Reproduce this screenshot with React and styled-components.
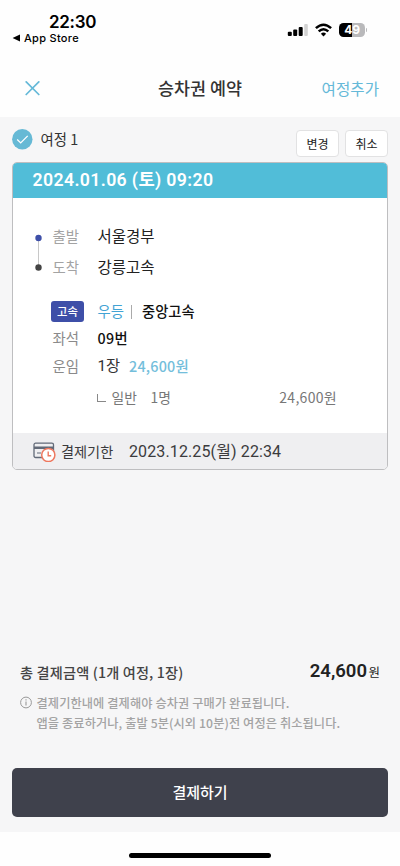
import React from 'react';
import styled, { createGlobalStyle } from 'styled-components';

const kr = `'Noto Sans CJK KR', sans-serif`;
const mixed = `Roboto, 'Noto Sans CJK KR', sans-serif`;

const GlobalStyle = createGlobalStyle`
  * { box-sizing: border-box; }
  body { margin: 0; background: #fff; font-family: ${kr}; color: #333; }
  button { font: inherit; border: 0; padding: 0; margin: 0; background: none; }
`;

const Screen = styled.div`
  width: 400px;
  height: 866px;
  display: flex;
  flex-direction: column;
  background: #fefefe;
  overflow: hidden;
  white-space: nowrap;
`;

const StatusBar = styled.header`
  height: 60px;
  padding: 12px 33px 0 12px;
  display: flex;
  justify-content: space-between;
  font-family: Inter, sans-serif;
  color: #000;
`;

const Clock = styled.div`
  height: 20px;
  padding-left: 37px;
  font-size: 17px;
  font-weight: 600;
  line-height: 20px;
  letter-spacing: -0.3px;
`;

const BackToApp = styled.div`
  display: flex;
  align-items: center;
  gap: 4px;
  height: 12px;
  font-size: 11px;
  font-weight: 500;
  letter-spacing: 0.3px;
  line-height: 12px;
`;

const StatusIcons = styled.div`
  display: flex;
  align-items: center;
  height: 16px;
  margin-top: 10px;
`;

const NavBar = styled.nav`
  height: 57px;
  padding: 0 21px 2px 25px;
  display: grid;
  grid-template-columns: 80px 1fr 80px;
  align-items: center;
`;

const CloseButton = styled.button`
  display: flex;
  width: 16px;
  height: 16px;
`;

const Title = styled.h1`
  margin: 0;
  font-size: 17.4px;
  font-weight: 500;
  line-height: 24px;
  text-align: center;
  padding-right: 4px;
  color: #333;
`;

const AddTrip = styled.button`
  font-size: 15.6px !important;
  line-height: 24px !important;
  text-align: right;
  color: #65b9d8;
`;

const Main = styled.main`
  height: 715px;
  background: #f6f6f7;
  padding: 0 12px;
  display: flex;
  flex-direction: column;
`;

const TripHead = styled.div`
  height: 45px;
  display: flex;
  align-items: flex-start;
  padding-top: 12px;
`;

const TripName = styled.div`
  flex: 1;
  margin-left: 7.5px;
  font-size: 14.4px;
  line-height: 20px;
`;

const SmallButton = styled.button`
  width: 43px;
  height: 27px;
  margin: 1px 0 0 6px;
  border: 1px solid #e2e2e3 !important;
  border-radius: 4px;
  background: #fff !important;
  font-size: 12px !important;
  line-height: 23px !important;
  color: #222;
`;

const Card = styled.section`
  height: 308px;
  border: 1px solid #bebec0;
  border-radius: 5px;
  background: #fff;
  overflow: hidden;
  display: flex;
  flex-direction: column;
`;

const CardDate = styled.div`
  height: 35px;
  flex: none;
  padding-left: 19.5px;
  background: #51bdd8;
  color: #fff;
  font-family: ${mixed};
  font-size: 17.7px;
  font-weight: 600;
  line-height: 35px;
  letter-spacing: 0.37px;
`;

const Route = styled.div`
  display: grid;
  grid-template-columns: 12px 1fr;
  column-gap: 7.5px;
  padding: 22px 0 0 20px;
`;

const RouteMark = styled.svg`
  display: block;
  margin-top: 11px;
`;

const Row = styled.div`
  height: ${(p) => p.$h}px;
  display: flex;
  align-items: center;
  line-height: ${(p) => p.$h}px;
`;

const Label = styled.span`
  width: 45px;
  font-size: 14.4px;
  color: ${(p) => (p.$soft ? '#a3a3a3' : '#8a8a8a')};
  font-weight: 400;
`;

const Place = styled.span`
  font-size: 15.5px;
  color: #222;
`;

const Details = styled.div`
  flex: 1;
  padding: 15px 50.5px 0 39.5px;
`;

const ClassCell = styled.span`
  width: 45px;
`;

const ClassBadge = styled.span`
  display: block;
  width: 33px;
  height: 21px;
  margin-left: -1.5px;
  border-radius: 3px;
  background: #3e4fa8;
  color: #fff;
  font-size: 11.3px;
  font-weight: 500;
  line-height: 21px;
  text-align: center;
`;

const Grade = styled.span`
  font-size: 14.4px;
  color: #42a3d4;
`;

const Divider = styled.i`
  width: 1px;
  height: 14px;
  margin: 2px 10px 0 7px;
  background: #aaa;
`;

const Company = styled.span`
  font-size: 14.3px;
  font-weight: 500;
  color: #111;
`;

const Seat = styled(Company)`
  letter-spacing: 0.3px;
`;

const Tickets = styled.span`
  width: 31.5px;
  padding-top: 1px;
  font-family: ${mixed};
  font-size: 15.3px;
  color: #333;
`;

const Fare = styled.span`
  font-size: 14.4px;
  font-weight: 500;
  letter-spacing: 0.2px;
  color: #74bedb;
`;

const Breakdown = styled.div`
  height: 32px;
  margin-top: 1px;
  padding-left: 44px;
  display: flex;
  align-items: center;
  font-size: 13.8px;
  line-height: 32px;
  color: #777;
`;

const Corner = styled.i`
  width: 9px;
  height: 8px;
  margin: 1px 5.5px 0 0.5px;
  border: solid #888;
  border-width: 0 0 1px 1px;
`;

const Passenger = styled.span`
  width: 39px;
`;

const BreakdownFare = styled.span`
  margin-left: auto;
  margin-right: -0.5px;
  font-size: 14px;
  letter-spacing: 0.3px;
`;

const Deadline = styled.div`
  height: 36px;
  display: flex;
  align-items: center;
  padding: 0 0 0 20px;
  background: #efeff1;
  line-height: 36px;
  color: #3b3b3d;
`;

const DeadlineLabel = styled.span`
  width: 68px;
  margin-left: 5px;
  font-size: 14.2px;
`;

const DeadlineTime = styled.span`
  margin-top: 1px;
  font-family: ${mixed};
  font-size: 16px;
  letter-spacing: 0.12px;
`;

const Summary = styled.div`
  margin-top: auto;
  padding: 0 8px;
`;

const Total = styled.div`
  height: 30px;
  display: flex;
  justify-content: space-between;
  align-items: center;
  line-height: 28px;
`;

const TotalLabel = styled.span`
  font-size: 14.2px;
  font-weight: 500;
  letter-spacing: 0.15px;
  color: #444;
`;

const TotalPrice = styled.strong`
  font-family: Roboto, sans-serif;
  font-size: 18.5px;
  font-weight: 600;
  color: #222;
`;

const Won = styled.small`
  margin-left: 1.5px;
  font-family: ${kr};
  font-size: 12.5px;
  font-weight: 400;
`;

const Notice = styled.p`
  margin: 6px 0 0;
  display: grid;
  grid-template-columns: 13px 1fr;
  column-gap: 3.5px;
  font-size: 12.2px;
  font-weight: 500;
  letter-spacing: 0.11px;
  line-height: 20px;
  color: #a3a3a3;
`;

const PayButton = styled.button`
  height: 49px;
  flex: none;
  margin: 35px 0 15.5px !important;
  border-radius: 5px;
  background: #3f414c !important;
  color: #fff;
  font-size: 15px !important;
  font-weight: 500 !important;
  line-height: 48px !important;
`;

const HomeArea = styled.footer`
  flex: 1;
  display: flex;
  justify-content: center;
  align-items: flex-start;
  padding-top: 21px;
`;

const HomeIndicator = styled.div`
  width: 142px;
  height: 5px;
  border-radius: 3px;
  background: #000;
`;

function Signal() {
  return (
    <svg width="20" height="14" viewBox="0 0 20 14" overflow="visible">
      <rect x="-1.2" y="8.8" width="4" height="4.2" rx="1" />
      <rect x="4.2" y="6.5" width="4" height="6.5" rx="1" />
      <rect x="9.7" y="4" width="4" height="9" rx="1" />
      <rect x="15.2" y="1" width="3.6" height="12" rx="1" fill="#d2d2d2" />
    </svg>
  );
}

const WifiSvg = styled.svg`
  margin: 0 7px 0 6px;
`;

function Wifi() {
  return (
    <WifiSvg width="17" height="14" viewBox="0 0 17 14" fill="none" stroke="#000" strokeWidth="2.5">
      <path d="M.9 5.2Q8.5-1.8 16.1 5.2" />
      <path d="M3.7 8.4Q8.5 4 13.3 8.4" />
      <path d="M5.9 10.7Q8.5 8.3 11.1 10.7L8.5 13.4Z" fill="#000" stroke="none" />
    </WifiSvg>
  );
}

const Battery = styled.div`
  position: relative;
  width: 26px;
  height: 14px;
  margin-right: 2px;
  border-radius: 4.5px;
  background: linear-gradient(90deg, #000 50%, #b9b9bb 50%);
  color: #fff;
  font-size: 12px;
  font-weight: 700;
  line-height: 14px;
  text-align: center;
  letter-spacing: -0.2px;

  &::after {
    content: '';
    position: absolute;
    left: 26.5px;
    top: 5px;
    width: 1.5px;
    height: 4px;
    border-radius: 0 2px 2px 0;
    background: #b9b9bb;
  }
`;

export default function App() {
  return (
    <Screen>
      <GlobalStyle />
      <StatusBar>
        <div>
          <Clock>22:30</Clock>
          <BackToApp>
            <svg width="8" height="8" viewBox="0 0 8 8"><path d="M.6 4 8 .6v6.8z" /></svg>
            App Store
          </BackToApp>
        </div>
        <StatusIcons>
          <Signal />
          <Wifi />
          <Battery>49</Battery>
        </StatusIcons>
      </StatusBar>

      <NavBar>
        <CloseButton aria-label="닫기">
          <svg width="16" height="16" viewBox="0 0 16 16" fill="none" stroke="#65b9d8" strokeWidth="1.7" strokeLinecap="round">
            <path d="M1.2 1.9 13.8 14.5M13.8 1.9 1.2 14.5" />
          </svg>
        </CloseButton>
        <Title>승차권 예약</Title>
        <AddTrip>여정추가</AddTrip>
      </NavBar>

      <Main>
        <TripHead>
          <svg width="21" height="21" viewBox="0 0 21 21" fill="none">
            <circle cx="10.3" cy="10.3" r="10.2" fill="#66b9d5" />
            <path d="m5.2 10.5 3.5 3.4 7-7" stroke="#fff" strokeWidth="1.3" />
          </svg>
          <TripName>여정 1</TripName>
          <SmallButton>변경</SmallButton>
          <SmallButton>취소</SmallButton>
        </TripHead>

        <Card>
          <CardDate>2024.01.06 (토) 09:20</CardDate>
          <Route>
            <RouteMark width="12" height="42" viewBox="0 0 12 42">
              <path d="M5.5 7v30" stroke="#c8c8c8" />
              <circle cx="5.5" cy="7" r="3.2" fill="#3e4fa8" />
              <circle cx="5.5" cy="36.5" r="3.2" fill="#444" />
            </RouteMark>
            <div>
              <Row $h={31}><Label $soft>출발</Label><Place>서울경부</Place></Row>
              <Row $h={31}><Label $soft>도착</Label><Place>강릉고속</Place></Row>
            </div>
          </Route>
          <Details>
            <Row $h={28}>
              <ClassCell><ClassBadge>고속</ClassBadge></ClassCell>
              <Grade>우등</Grade><Divider /><Company>중앙고속</Company>
            </Row>
            <Row $h={26}><Label>좌석</Label><Seat>09번</Seat></Row>
            <Row $h={29}><Label>운임</Label><Tickets>1장</Tickets><Fare>24,600원</Fare></Row>
            <Breakdown>
              <Corner /><Passenger>일반</Passenger><span>1명</span>
              <BreakdownFare>24,600원</BreakdownFare>
            </Breakdown>
          </Details>
          <Deadline>
            <svg width="23" height="22" viewBox="0 0 23 22" fill="none">
              <rect x="1" y="3.2" width="19.5" height="14.3" rx="1.6" stroke="#626a78" strokeWidth="1.3" />
              <path d="M1 7.7h19.5" stroke="#626a78" strokeWidth="2.4" />
              <path d="M4 13h4" stroke="#626a78" strokeWidth="1.2" />
              <circle cx="15.3" cy="15" r="6.6" fill="#fff" stroke="#ee785f" strokeWidth="1.5" />
              <path d="M15.2 11.4v4.3h3" stroke="#ee785f" strokeWidth="1.4" />
            </svg>
            <DeadlineLabel>결제기한</DeadlineLabel>
            <DeadlineTime>2023.12.25(월) 22:34</DeadlineTime>
          </Deadline>
        </Card>

        <Summary>
          <Total>
            <TotalLabel>총 결제금액 (1개 여정, 1장)</TotalLabel>
            <TotalPrice>24,600<Won>원</Won></TotalPrice>
          </Total>
          <Notice>
            <svg width="13" height="20" viewBox="0 0 13 20" fill="none" stroke="#999">
              <circle cx="6" cy="9.5" r="5.4" />
              <path d="M6 8.5v4M6 6.2v1.2" strokeWidth="1.1" />
            </svg>
            <span>결제기한내에 결제해야 승차권 구매가 완료됩니다.<br />앱을 종료하거나, 출발 5분(시외 10분)전 여정은 취소됩니다.</span>
          </Notice>
        </Summary>
        <PayButton>결제하기</PayButton>
      </Main>
      <HomeArea><HomeIndicator /></HomeArea>
    </Screen>
  );
}
